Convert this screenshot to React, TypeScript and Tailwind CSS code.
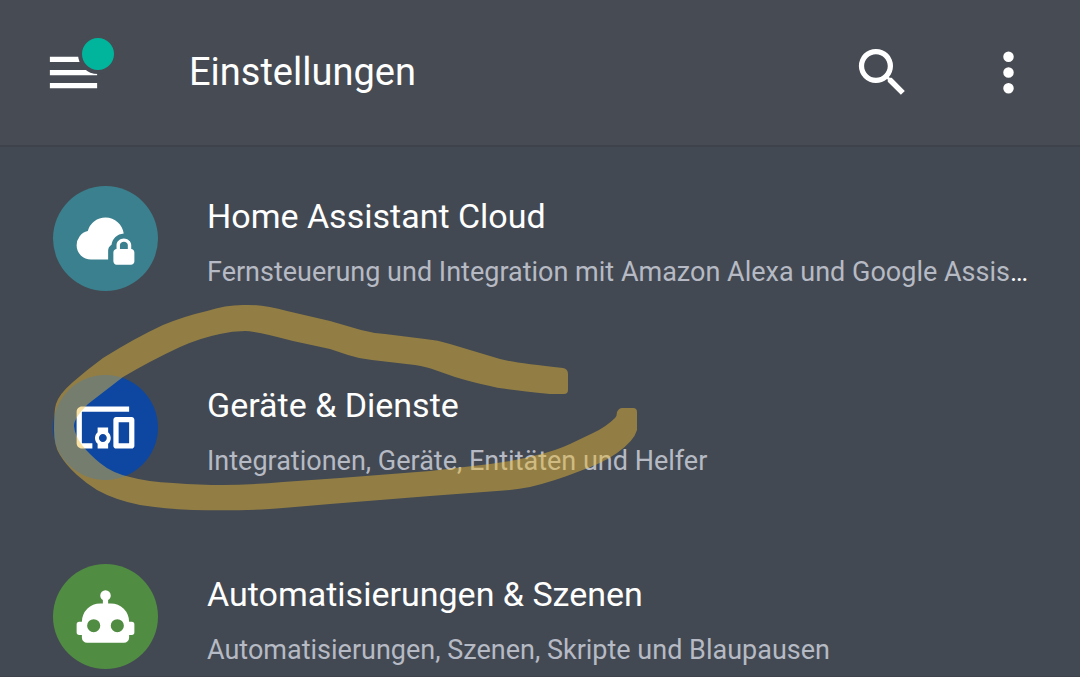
import type { ReactNode } from "react";
import { MdDevicesOther } from "react-icons/md";

type SettingsItem = {
  href: string;
  title: string;
  description: string;
  circle: string;
  icon: ReactNode;
  marked?: boolean;
};

function MdiIcon({ path }: { path: string }) {
  return (
    <svg viewBox="0 0 24 24" className="size-[63px] fill-current" aria-hidden="true">
      <path d={path} />
    </svg>
  );
}

const ICONS = {
  menu: "M3 6h18v2H3V6m0 5h18v2H3v-2m0 5h18v2H3v-2Z",
  magnify:
    "M9.5 3A6.5 6.5 0 0 1 16 9.5c0 1.61-.59 3.09-1.56 4.23l.27.27h.79l5 5-1.5 1.5-5-5v-.79l-.27-.27A6.516 6.516 0 0 1 9.5 16a6.5 6.5 0 0 1 0-13m0 2C7 5 5 7 5 9.5S7 14 9.5 14 14 12 14 9.5 12 5 9.5 5Z",
  dots: "M12 16a2 2 0 1 1 0 4 2 2 0 0 1 0-4m0-6a2 2 0 1 1 0 4 2 2 0 0 1 0-4m0-6a2 2 0 1 1 0 4 2 2 0 0 1 0-4Z",
  cloudLock:
    "M6.5 20Q4.22 20 2.61 18.43 1 16.85 1 14.58 1 12.63 2.17 11.1 3.35 9.57 5.25 9.15 5.88 6.85 7.75 5.43 9.63 4 12 4c3.6 0 6.5 2.7 6.95 6.05-2.5.2-4.4 1.95-4.65 4.35-.85.5-1.3 1.3-1.3 2.3V20H6.5M21.8 16v-1.5c0-1.4-1.4-2.5-2.8-2.5s-2.8 1.1-2.8 2.5V16c-.6 0-1.2.6-1.2 1.2v3.5c0 .7.6 1.3 1.2 1.3h5.5c.7 0 1.3-.6 1.3-1.2v-3.5c0-.7-.6-1.3-1.2-1.3m-1.3 0h-3v-1.5c0-.8.7-1.3 1.5-1.3s1.5.5 1.5 1.3V16Z",
  robot:
    "M12 2a2 2 0 0 1 2 2c0 .74-.4 1.39-1 1.73V7h1a7 7 0 0 1 7 7h1a1 1 0 0 1 1 1v3a1 1 0 0 1-1 1h-1v1a2 2 0 0 1-2 2H5a2 2 0 0 1-2-2v-1H2a1 1 0 0 1-1-1v-3a1 1 0 0 1 1-1h1a7 7 0 0 1 7-7h1V5.73c-.6-.34-1-.99-1-1.73a2 2 0 0 1 2-2M7.5 13a2.5 2.5 0 1 0 0 5 2.5 2.5 0 0 0 0-5m9 0a2.5 2.5 0 1 0 0 5 2.5 2.5 0 0 0 0-5Z",
};

const ITEMS: SettingsItem[] = [
  {
    href: "#cloud",
    title: "Home Assistant Cloud",
    description:
      "Fernsteuerung und Integration mit Amazon Alexa und Google Assistant",
    circle: "bg-[#3b808e]",
    icon: <MdiIcon path={ICONS.cloudLock} />,
  },
  {
    href: "#integrations",
    title: "Geräte & Dienste",
    description: "Integrationen, Geräte, Entitäten und Helfer",
    circle: "bg-[#0d47a1]",
    icon: <MdDevicesOther className="size-[63px]" aria-hidden="true" />,
    marked: true,
  },
  {
    href: "#automations",
    title: "Automatisierungen & Szenen",
    description: "Automatisierungen, Szenen, Skripte und Blaupausen",
    circle: "bg-[#518c43]",
    icon: <MdiIcon path={ICONS.robot} />,
  },
];

// Hand-drawn highlighter stroke around a row
function Marker() {
  return (
    <svg
      viewBox="0 300 680 220"
      className="pointer-events-none absolute -top-[75px] left-0 h-[220px] w-[680px]"
      aria-hidden="true"
    >
      <path
        fill="#efbe35"
        fillOpacity="0.46"
        d="M54 430Q54 410 56 404Q59 394 73 382Q88 369 103 358Q135 338 163 325Q185 316 207 311Q225 305 243 305Q262 304 287 311L330 321L361 330Q372 333 385 334L425 339Q438 340 450 344L470 350L500 359Q515 363 563 368Q568 369 568 374V390Q568 394 564 394H550Q500 389 490 386Q475 383 455 377L435 370Q427 367 415 365L372 360Q360 359 348 355L330 349L293 341Q255 331 245 331Q232 331 220 334Q200 338 180 347Q150 361 123 377L88 404Q74 418 74 426Q75 436 82 445Q89 454 100 463Q112 473 130 477Q148 482 173 483Q200 485 223 485Q250 485 283 482L340 478L430 471L490 464Q515 461 537 455Q555 451 570 444L593 433Q606 427 615 418Q617 416 617 412Q619 408 622 408H633Q637 408 637 412V430Q634 441 617 453Q603 463 580 471Q555 481 530 487Q515 490 497 491L430 496L330 504L283 508Q250 511 193 510Q165 509 140 505Q115 500 97 490Q87 484 77 475Q66 465 60 455Q54 446 54 430Z"
      />
    </svg>
  );
}

function SettingsRow({ item }: { item: SettingsItem }) {
  return (
    <li className="relative">
      <a href={item.href} className="flex items-center gap-[49px] pr-12 pl-[53px]">
        <span
          className={`flex size-[105px] shrink-0 items-center justify-center rounded-full ${item.circle}`}
        >
          {item.icon}
        </span>
        <span className="flex min-w-0 flex-1 flex-col gap-[18px] pt-2">
          <span className="text-[34px] leading-10">{item.title}</span>
          <span className="truncate text-[27px] leading-9">
            <span className="text-[#b6bac4]">{item.description}</span>
          </span>
        </span>
      </a>
      {item.marked && <Marker />}
    </li>
  );
}

export default function App() {
  return (
    <div className="min-h-screen overflow-hidden bg-[#434952] font-[Roboto,sans-serif] text-white">
      <header className="flex h-[147px] items-center border-b-2 border-[#3e424b] bg-[#474b53] pr-10 pl-[42px]">
        <button type="button" aria-label="Menü" className="relative">
          <MdiIcon path={ICONS.menu} />
          <span className="absolute -top-[7px] left-9 size-10 rounded-full border-4 border-[#474b53] bg-[#00b59c]" />
        </button>
        <h1 className="ml-[84px] flex-1 pb-0.5 text-[38px] leading-12">Einstellungen</h1>
        <div className="flex gap-[63px]">
          <button type="button" aria-label="Suchen">
            <MdiIcon path={ICONS.magnify} />
          </button>
          <button type="button" aria-label="Mehr">
            <MdiIcon path={ICONS.dots} />
          </button>
        </div>
      </header>
      <main className="border-b border-[#3e424b] pt-[39px] pb-[7px]">
        <ul className="flex flex-col gap-[84px]">
          {ITEMS.map((item) => (
            <SettingsRow key={item.href} item={item} />
          ))}
        </ul>
      </main>
    </div>
  );
}
